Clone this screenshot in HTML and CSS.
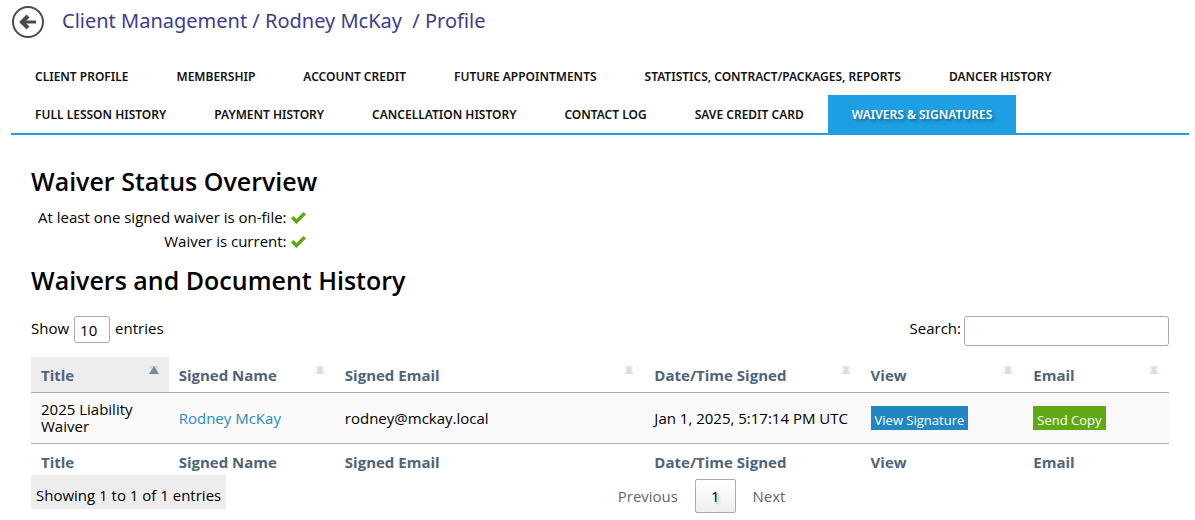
FILE: index.html
```html
<!DOCTYPE html>
<html lang="en">
  <head>
    <meta charset="utf-8">
    <title>Client Profile</title>
    <link rel="stylesheet" href="styles.css">
  </head>
  <body>
    <header class="page-header">
      <a href="#" class="back" aria-label="Back">
        <svg width="34" height="34" viewBox="0 0 34 34" fill="none" stroke="#4a4a4a">
          <circle cx="17" cy="17" r="15" stroke-width="2"/>
          <path d="M10 17H25" stroke-width="3"/>
          <path d="M17 11L11 17L17 23" stroke-width="4"/>
        </svg>
      </a>
      <h1 class="page-title">Client Management / Rodney McKay &nbsp;/ Profile</h1>
    </header>

    <nav class="tabs">
      <a href="#" class="tab">Client Profile</a>
      <a href="#" class="tab">Membership</a>
      <a href="#" class="tab">Account Credit</a>
      <a href="#" class="tab">Future Appointments</a>
      <a href="#" class="tab">Statistics, Contract/Packages, Reports</a>
      <a href="#" class="tab">Dancer History</a>
      <a href="#" class="tab">Full Lesson History</a>
      <a href="#" class="tab">Payment History</a>
      <a href="#" class="tab">Cancellation History</a>
      <a href="#" class="tab">Contact Log</a>
      <a href="#" class="tab">Save Credit Card</a>
      <a href="#" class="tab active">Waivers &amp; Signatures</a>
    </nav>

    <main class="content">
      <h2 class="heading">Waiver Status Overview</h2>
      <div class="status">
        <span>At least one signed waiver is on-file:</span>
        <svg class="check" width="15" height="12" viewBox="0 0 15 12"><path d="M0 6.500L2.500 4L5.500 7L12.500 0L15 2.500L5.500 12Z" fill="#5fa916"/></svg>
        <span>Waiver is current:</span>
        <svg class="check" width="15" height="12" viewBox="0 0 15 12"><path d="M0 6.500L2.500 4L5.500 7L12.500 0L15 2.500L5.500 12Z" fill="#5fa916"/></svg>
      </div>

      <h2 class="heading">Waivers and Document History</h2>
      <div class="controls">
        <label class="length">Show
          <select class="length-select">
            <option>10</option>
            <option>25</option>
            <option>50</option>
          </select>
          entries</label>
        <label class="search">Search:
          <input type="search" class="search-input"></label>
      </div>

      <table class="history">
        <colgroup>
          <col class="col-title">
          <col class="col-name">
          <col class="col-mail">
          <col class="col-date">
          <col class="col-view">
          <col class="col-send">
        </colgroup>
        <thead>
          <tr>
            <th class="sorted"><div class="th-in">Title <svg class="sort" width="10" height="8" viewBox="0 0 10 8"><path d="M0 0H10L6 8H4Z" fill="#d5d8dc"/><path d="M5 0L10 8H0Z" fill="#7b8a99"/></svg></div></th>
            <th><div class="th-in">Signed Name <svg class="sort" width="10" height="8" viewBox="0 0 10 8"><path d="M1 0H9L6 8H4Z" fill="#e1e4e8"/><path d="M5 0L10 8H0Z" fill="#d5dae0" fill-opacity="0.7"/></svg></div></th>
            <th><div class="th-in">Signed Email <svg class="sort" width="10" height="8" viewBox="0 0 10 8"><path d="M1 0H9L6 8H4Z" fill="#e1e4e8"/><path d="M5 0L10 8H0Z" fill="#d5dae0" fill-opacity="0.7"/></svg></div></th>
            <th><div class="th-in">Date/Time Signed <svg class="sort" width="10" height="8" viewBox="0 0 10 8"><path d="M1 0H9L6 8H4Z" fill="#e1e4e8"/><path d="M5 0L10 8H0Z" fill="#d5dae0" fill-opacity="0.7"/></svg></div></th>
            <th><div class="th-in">View <svg class="sort" width="10" height="8" viewBox="0 0 10 8"><path d="M1 0H9L6 8H4Z" fill="#e1e4e8"/><path d="M5 0L10 8H0Z" fill="#d5dae0" fill-opacity="0.7"/></svg></div></th>
            <th><div class="th-in">Email <svg class="sort" width="10" height="8" viewBox="0 0 10 8"><path d="M1 0H9L6 8H4Z" fill="#e1e4e8"/><path d="M5 0L10 8H0Z" fill="#d5dae0" fill-opacity="0.7"/></svg></div></th>
          </tr>
        </thead>
        <tbody>
          <tr>
            <td>2025 Liability Waiver</td>
            <td><a href="#" class="client">Rodney McKay</a></td>
            <td>rodney@mckay.local</td>
            <td class="date">Jan 1, 2025, 5:17:14 PM UTC</td>
            <td><button class="btn view">View Signature</button></td>
            <td><button class="btn send">Send Copy</button></td>
          </tr>
        </tbody>
        <tfoot>
          <tr>
            <th>Title</th>
            <th>Signed Name</th>
            <th>Signed Email</th>
            <th>Date/Time Signed</th>
            <th>View</th>
            <th>Email</th>
          </tr>
        </tfoot>
      </table>

      <div class="table-bottom">
        <div class="info">Showing 1 to 1 of 1 entries</div>
        <div class="pages">
          <button class="page">Previous</button>
          <button class="page current">1</button>
          <button class="page">Next</button>
        </div>
      </div>
    </main>
  </body>
</html>
```
FILE: styles.css
```css
* {
  box-sizing: border-box;
}
body {
  margin: 0;
  padding: 0 6px 0 11px;
  background-color: white;
  color: black;
  font-family: "Open Sans", "Noto Sans", sans-serif;
  font-size: 15px;
  line-height: 17px;
}
button, input, select {
  font-family: inherit;
  font-size: inherit;
}

.page-header {
  display: flex;
  align-items: center;
  gap: 17px;
  padding-top: 5px;
}
.back {
  height: 34px;
}
.page-title {
  margin: 0;
  padding-bottom: 2px;
  font-family: "Noto Sans", "Open Sans", sans-serif;
  font-size: 20px;
  line-height: 30px;
  font-weight: 400;
  color: #3c3c8c;
}

.tabs {
  display: flex;
  flex-wrap: wrap;
  margin-top: 18px;
  border-bottom: 2px solid #1e9fe3;
}
.tab {
  padding: 2px 24px 0;
  font-family: "Noto Sans", "Open Sans", sans-serif;
  font-size: 12px;
  line-height: 36px;
  font-weight: 600;
  color: #111;
  text-transform: uppercase;
  text-decoration: none;
}
.tab.active {
  background-color: #1e9fe3;
  color: white;
  text-shadow: 2px 2px 3px rgba(0, 0, 0, 0.4);
}

.content {
  padding: 30px 20px 0;
}
.heading {
  margin: 0;
  font-size: 25px;
  line-height: 32px;
  font-weight: 600;
}
.status {
  display: grid;
  grid-template-columns: max-content max-content;
  column-gap: 4px;
  width: max-content;
  padding: 8px 0 11px 7px;
  line-height: 24px;
  align-items: center;
}
.status span {
  text-align: right;
}
.check {
  margin-top: 2px;
}

.controls {
  display: flex;
  justify-content: space-between;
  align-items: flex-start;
  margin-top: 20px;
}
.length, .search {
  display: flex;
  align-items: flex-start;
}
.length {
  gap: 5px;
  line-height: 24px;
}
.length-select {
  appearance: none;
  width: 36px;
  height: 27px;
  padding: 0 5px;
  border: 1px solid #aaa;
  border-radius: 3px;
  background-color: white;
}
.search {
  gap: 3px;
  line-height: 25px;
}
.search-input {
  width: 205px;
  height: 30px;
  border: 1px solid #aaa;
  border-radius: 3px;
}

.history {
  width: 100%;
  margin-top: 11px;
  border-collapse: separate;
  border-spacing: 0;
  table-layout: fixed;
}
.col-title { width: 12.1%; }
.col-name { width: 14.6%; }
.col-mail { width: 27.2%; }
.col-date { width: 19%; }
.col-view { width: 14.3%; }
.col-send { width: 12.8%; }
.history th {
  padding: 10px 10px 8px;
  text-align: left;
  font-weight: 700;
  color: #4f6479;
}
.history thead th {
  padding: 9px 10px;
  border-bottom: 1px solid #aaa;
}
.history .sorted {
  background-color: #ededed;
}
.th-in {
  display: flex;
  justify-content: space-between;
  line-height: 19px;
  height: 17px;
}
.history tfoot th {
  padding: 10px 10px 4px;
}
.history td {
  height: 51px;
  padding: 8px 10px;
  background-color: #f9f9f9;
  border-bottom: 1px solid #aaa;
}
.history .date {
  padding-right: 0;
  white-space: nowrap;
}
.client {
  color: #2a8bc5;
  text-decoration: none;
}
.btn {
  display: block;
  height: 24px;
  padding: 4px 4px 0;
  border: none;
  color: white;
  font-size: 13px;
  line-height: 20px;
  white-space: nowrap;
}
.view { background-color: #2186c1; }
.send { background-color: #5fa916; }

.table-bottom {
  display: flex;
  align-items: flex-start;
}
.info {
  height: 34px;
  padding: 12px 5px 5px;
  background-color: #ededed;
}
.pages {
  flex: 1;
  display: flex;
  justify-content: center;
  padding: 4px 0 0 8px;
}
.page {
  height: 34px;
  padding: 0 17px;
  border: none;
  background: none;
  color: #666;
}
.page.current {
  padding: 0 15px;
  border: 1px solid #aaa;
  border-radius: 2px;
  background-image: linear-gradient(white, #eee);
  color: black;
  text-shadow: 2px 2px 3px rgba(0, 0, 0, 0.3);
}
```
